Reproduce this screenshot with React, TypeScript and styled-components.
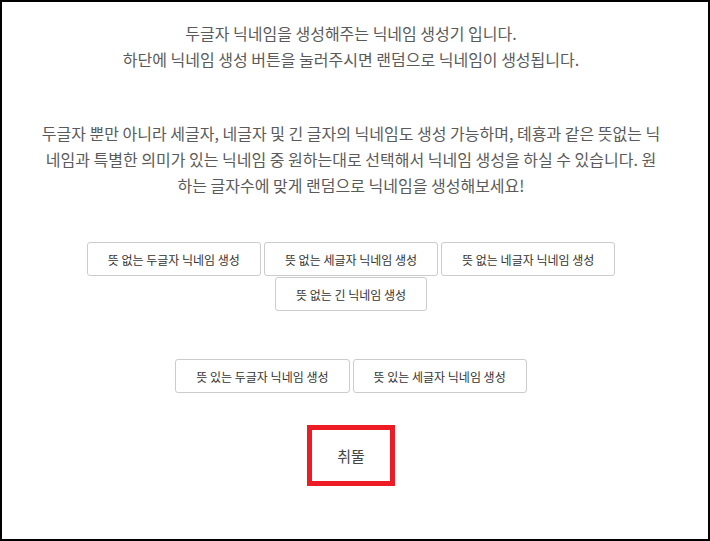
import styled, { createGlobalStyle } from 'styled-components';

const GlobalStyle = createGlobalStyle`
  html, body {
    margin: 0;
    padding: 0;
    background: #ffffff;
  }
  body {
    font-family: 'Noto Sans CJK KR', 'Noto Sans', sans-serif;
  }
`;

const Frame = styled.div`
  box-sizing: border-box;
  width: 710px;
  height: 541px;
  border: 2px solid #000000;
  padding: 18px 8px 0 0;
  display: flex;
  flex-direction: column;
  align-items: center;
`;

const Intro = styled.p`
  margin: 0;
  font-size: 16px;
  line-height: 26px;
  color: #5a5a5a;
  text-align: center;
  white-space: nowrap;
`;

const Description = styled(Intro)`
  margin-top: 48px;
`;

const ButtonGroup = styled.div<{ $top: number }>`
  margin-top: ${(p) => p.$top}px;
  max-width: 540px;
  display: flex;
  flex-wrap: wrap;
  justify-content: center;
  gap: 1px 3px;
`;

const NickButton = styled.button`
  box-sizing: border-box;
  height: 34px;
  padding: 0 20px;
  background: #ffffff;
  border: 1px solid #cccccc;
  border-radius: 3px;
  font-family: 'Noto Sans CJK KR', 'Noto Sans', sans-serif;
  font-size: 12px;
  color: #333333;
  cursor: pointer;

  &:hover {
    background: #f5f5f5;
  }
`;

const ResultBox = styled.div`
  box-sizing: border-box;
  margin-top: 32px;
  width: 88px;
  height: 61px;
  border: 5px solid #ed1c24;
  display: flex;
  align-items: center;
  justify-content: center;
  font-size: 15px;
  color: #444444;
`;

const meaningless = [
  '뜻 없는 두글자 닉네임 생성',
  '뜻 없는 세글자 닉네임 생성',
  '뜻 없는 네글자 닉네임 생성',
  '뜻 없는 긴 닉네임 생성',
];

const meaningful = ['뜻 있는 두글자 닉네임 생성', '뜻 있는 세글자 닉네임 생성'];

const App = () => {
  return (
    <>
      <GlobalStyle />
      <Frame>
        <Intro>
          두글자 닉네임을 생성해주는 닉네임 생성기 입니다.
          <br />
          하단에 닉네임 생성 버튼을 눌러주시면 랜덤으로 닉네임이 생성됩니다.
        </Intro>
        <Description>
          두글자 뿐만 아니라 세글자, 네글자 및 긴 글자의 닉네임도 생성 가능하며, 톄횽과 같은 뜻없는 닉
          <br />
          네임과 특별한 의미가 있는 닉네임 중 원하는대로 선택해서 닉네임 생성을 하실 수 있습니다. 원
          <br />
          하는 글자수에 맞게 랜덤으로 닉네임을 생성해보세요!
        </Description>
        <ButtonGroup $top={44}>
          {meaningless.map((label) => (
            <NickButton key={label}>{label}</NickButton>
          ))}
        </ButtonGroup>
        <ButtonGroup $top={48}>
          {meaningful.map((label) => (
            <NickButton key={label}>{label}</NickButton>
          ))}
        </ButtonGroup>
        <ResultBox>취뚤</ResultBox>
      </Frame>
    </>
  );
};

export default App;
